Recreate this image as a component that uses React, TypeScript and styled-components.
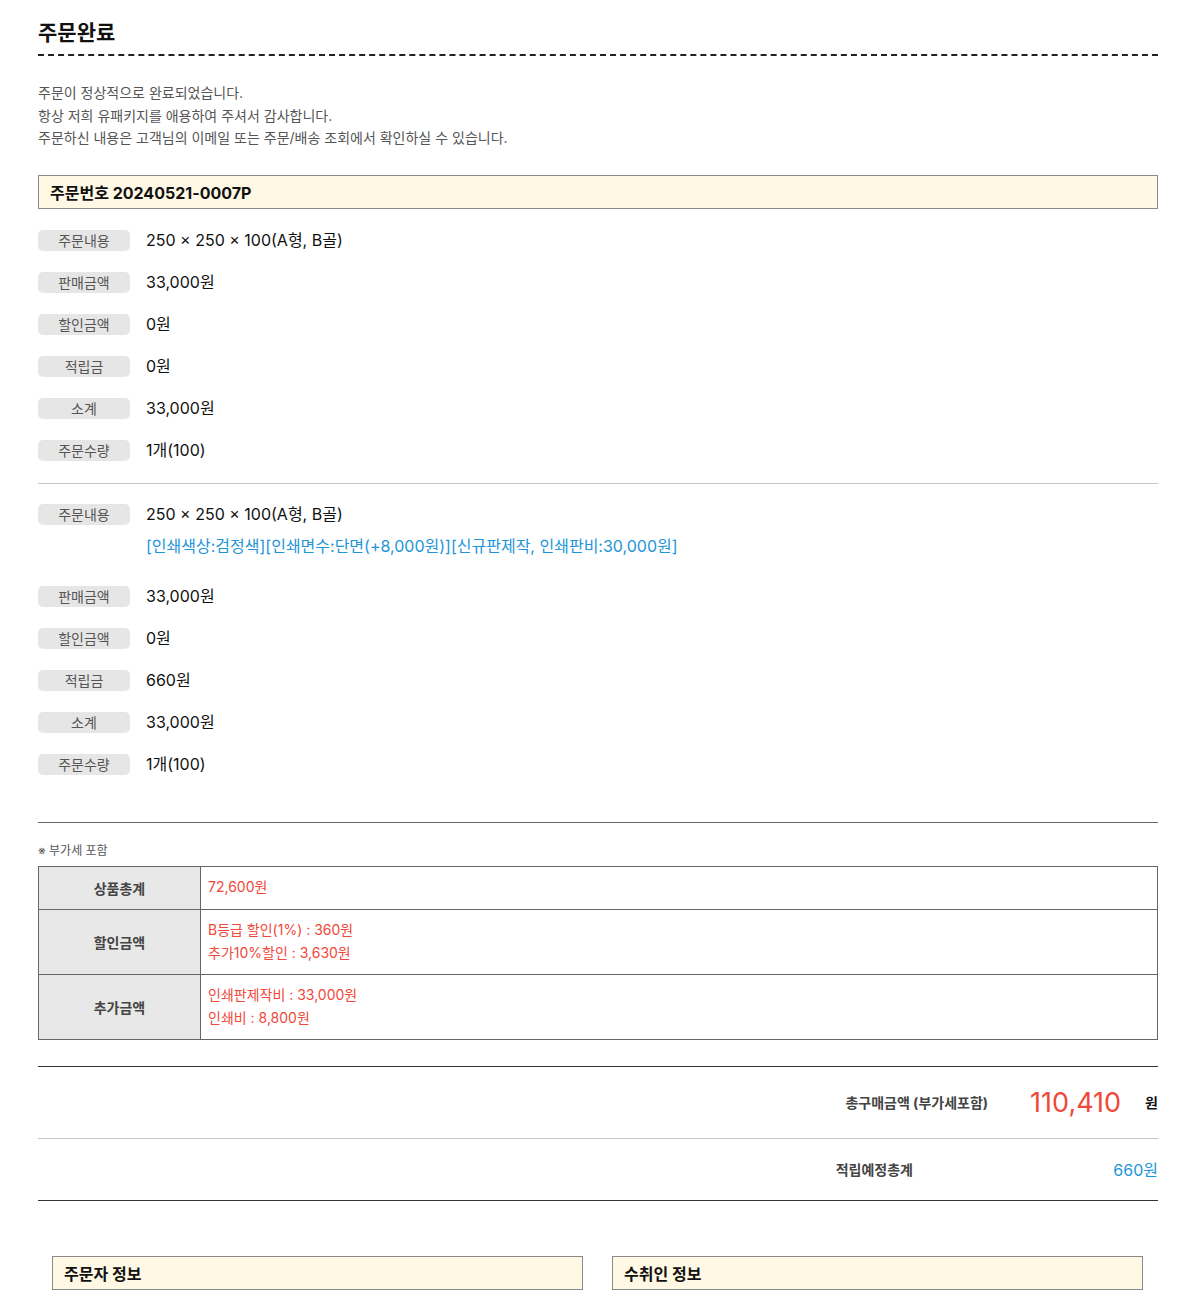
import React from "react";
import styled, { createGlobalStyle } from "styled-components";

const Global = createGlobalStyle`
  html, body { margin: 0; padding: 0; background: #fff; }
  body {
    font-family: "Inter", "Noto Sans CJK KR", "Noto Sans", sans-serif;
    color: #222;
  }
  * { box-sizing: border-box; }
`;

const Page = styled.div`
  width: 1180px;
  padding: 15px 22px 10px 38px;
`;

const Title = styled.h1`
  margin: 0;
  font-size: 21px;
  font-weight: 700;
  line-height: 36px;
  color: #111;
  padding-bottom: 3px;
  border-bottom: 2px dashed #222;
`;

const Intro = styled.div`
  margin-top: 26px;
  font-size: 14px;
  line-height: 22.5px;
  color: #555;
`;

const InfoBar = styled.div`
  height: 34px;
  display: flex;
  align-items: center;
  padding: 0 11px;
  background: #fff8e4;
  border: 1px solid #8a8a8a;
  font-size: 16px;
  font-weight: 700;
  color: #111;
`;

const OrderBar = styled(InfoBar)`
  margin-top: 25px;
`;

const Group = styled.div<{ $last?: boolean }>`
  padding: ${(p) => (p.$last ? "20px 0 47px" : "21px 0 22px")};
  border-bottom: 1px solid ${(p) => (p.$last ? "#666" : "#c4c4c4")};
  display: flex;
  flex-direction: column;
  gap: 21px;
`;

const Row = styled.div`
  display: flex;
  align-items: flex-start;
  gap: 16px;
`;

const Pill = styled.span`
  flex: 0 0 92px;
  height: 21px;
  border-radius: 5px;
  background: #e6e6e6;
  color: #555;
  font-size: 14px;
  line-height: 21px;
  text-align: center;
`;

const Value = styled.div`
  font-size: 16px;
  line-height: 21px;
  color: #111;
`;

const Options = styled.div`
  margin: 11px 0 8px;
  font-size: 16px;
  line-height: 21px;
  color: #1e95d8;
`;

const VatNote = styled.div`
  margin-top: 19px;
  font-size: 12px;
  line-height: 18px;
  color: #555;
`;

const Table = styled.div`
  margin-top: 6px;
  border: 1px solid #666;
  display: grid;
  grid-template-columns: 162px 1fr;
`;

const Th = styled.div<{ $h: number; $first?: boolean }>`
  height: ${(p) => p.$h}px;
  background: #e8e8e8;
  border-right: 1px solid #666;
  border-top: ${(p) => (p.$first ? "none" : "1px solid #666")};
  display: flex;
  align-items: center;
  justify-content: center;
  font-size: 14px;
  font-weight: 700;
  color: #444;
`;

const Td = styled.div<{ $first?: boolean }>`
  border-top: ${(p) => (p.$first ? "none" : "1px solid #666")};
  display: flex;
  flex-direction: column;
  justify-content: center;
  padding: 0 7px;
  font-size: 14px;
  line-height: 22.5px;
  color: #f0483a;
`;

const Totals = styled.div`
  margin-top: 26px;
  border-top: 1px solid #333;
  border-bottom: 1px solid #333;
`;

const TotalRow = styled.div<{ $divider?: boolean }>`
  display: flex;
  align-items: center;
  justify-content: flex-end;
  height: ${(p) => (p.$divider ? "72px" : "61px")};
  border-bottom: ${(p) => (p.$divider ? "1px solid #c4c4c4" : "none")};
`;

const TotalLabel = styled.span`
  font-size: 14px;
  font-weight: 700;
  color: #444;
`;

const BigNum = styled.span`
  font-size: 27px;
  color: #f0483a;
  margin-left: 42px;
`;

const Won = styled.span`
  font-size: 14px;
  font-weight: 700;
  color: #111;
  margin-left: 24px;
`;

const BlueVal = styled.span`
  font-size: 16px;
  color: #1e95d8;
  text-align: right;
  width: 245px;
`;

const InfoCols = styled.div`
  margin-top: 55px;
  padding: 0 15px 0 14px;
  display: grid;
  grid-template-columns: 1fr 1fr;
  gap: 29px;
`;

type Item = { label: string; value: React.ReactNode; extra?: string };

const group1: Item[] = [
  { label: "주문내용", value: "250 × 250 × 100(A형, B골)" },
  { label: "판매금액", value: "33,000원" },
  { label: "할인금액", value: "0원" },
  { label: "적립금", value: "0원" },
  { label: "소계", value: "33,000원" },
  { label: "주문수량", value: "1개(100)" },
];

const group2: Item[] = [
  {
    label: "주문내용",
    value: "250 × 250 × 100(A형, B골)",
    extra: "[인쇄색상:검정색][인쇄면수:단면(+8,000원)][신규판제작, 인쇄판비:30,000원]",
  },
  { label: "판매금액", value: "33,000원" },
  { label: "할인금액", value: "0원" },
  { label: "적립금", value: "660원" },
  { label: "소계", value: "33,000원" },
  { label: "주문수량", value: "1개(100)" },
];

const Items = ({ items }: { items: Item[] }) => (
  <>
    {items.map((it, i) => (
      <Row key={i}>
        <Pill>{it.label}</Pill>
        <div>
          <Value>{it.value}</Value>
          {it.extra && <Options>{it.extra}</Options>}
        </div>
      </Row>
    ))}
  </>
);

export default function App() {
  return (
    <Page>
      <Global />
      <Title>주문완료</Title>
      <Intro>
        주문이 정상적으로 완료되었습니다.
        <br />
        항상 저희 유패키지를 애용하여 주셔서 감사합니다.
        <br />
        주문하신 내용은 고객님의 이메일 또는 주문/배송 조회에서 확인하실 수 있습니다.
      </Intro>
      <OrderBar>주문번호 20240521-0007P</OrderBar>
      <Group>
        <Items items={group1} />
      </Group>
      <Group $last>
        <Items items={group2} />
      </Group>
      <VatNote>※ 부가세 포함</VatNote>
      <Table>
        <Th $h={42} $first>상품총계</Th>
        <Td $first>72,600원</Td>
        <Th $h={65}>할인금액</Th>
        <Td>
          <span>B등급 할인(1%) : 360원</span>
          <span>추가10%할인 : 3,630원</span>
        </Td>
        <Th $h={65}>추가금액</Th>
        <Td>
          <span>인쇄판제작비 : 33,000원</span>
          <span>인쇄비 : 8,800원</span>
        </Td>
      </Table>
      <Totals>
        <TotalRow $divider>
          <TotalLabel>총구매금액 (부가세포함)</TotalLabel>
          <BigNum>110,410</BigNum>
          <Won>원</Won>
        </TotalRow>
        <TotalRow>
          <TotalLabel>적립예정총계</TotalLabel>
          <BlueVal>660원</BlueVal>
        </TotalRow>
      </Totals>
      <InfoCols>
        <InfoBar>주문자 정보</InfoBar>
        <InfoBar>수취인 정보</InfoBar>
      </InfoCols>
    </Page>
  );
}
